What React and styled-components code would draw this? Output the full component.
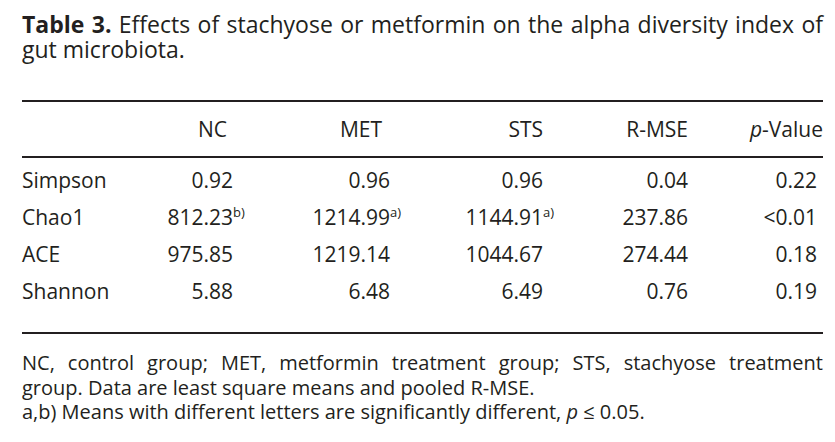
import React from 'react';
import styled, { createGlobalStyle } from 'styled-components';

const GlobalStyle = createGlobalStyle`
  body {
    margin: 0;
    background: #fff;
    color: #231f20;
    font-family: "Open Sans", "DejaVu Sans", sans-serif;
  }
`;

const Page = styled.div`
  width: 835px;
  height: 442px;
  box-sizing: border-box;
  padding: 12px 12px 0 22px;
  overflow: hidden;
`;

const Caption = styled.div`
  font-size: 23px;
  line-height: 25px;
  margin-bottom: 38px;
`;

const Line = styled.div`
  text-align: ${(p) => (p.$justify ? 'justify' : 'left')};
  text-align-last: ${(p) => (p.$justify ? 'justify' : 'left')};
  white-space: nowrap;
`;

const Label = styled.b`
  font-weight: 700;
`;

const Table = styled.div`
  border-top: 2px solid #231f20;
  border-bottom: 2px solid #231f20;
  font-size: 21px;
  line-height: 25px;
`;

const Head = styled.div`
  border-bottom: 2px solid #231f20;
`;

const Body = styled.div`
  padding: 4px 0 22px;
`;

const Row = styled.div`
  display: grid;
  grid-template-columns: 128px 83px 157px 153px 145px 135px;
  align-items: center;
  height: ${(p) => (p.$head ? 54 : 37)}px;
`;

const Cell = styled.div`
  text-align: ${(p) => (p.$left ? 'left' : 'right')};
  padding-right: ${(p) => p.$pad || 0}px;
`;

const Num = styled.span`
  position: relative;
`;

const Sup = styled.sup`
  position: absolute;
  left: 100%;
  top: 3px;
  font-size: 13px;
  line-height: 1;
  vertical-align: baseline;
`;

const Notes = styled.div`
  margin-top: 17px;
  font-size: 20px;
  line-height: 24.5px;
`;

const headers = [
  { text: 'NC', pad: 6 },
  { text: 'MET', pad: 8 },
  { text: 'STS', pad: 0 },
  { text: 'R-MSE', pad: 0 },
  { text: 'p', pad: 0, italic: true },
];

const valuePad = [0, 0, 0, 0, 6];

const rows = [
  { name: 'Simpson', values: [['0.92'], ['0.96'], ['0.96'], ['0.04'], ['0.22']] },
  {
    name: 'Chao1',
    values: [['812.23', 'b)'], ['1214.99', 'a)'], ['1144.91', 'a)'], ['237.86'], ['<0.01']],
  },
  { name: 'ACE', values: [['975.85'], ['1219.14'], ['1044.67'], ['274.44'], ['0.18']] },
  { name: 'Shannon', values: [['5.88'], ['6.48'], ['6.49'], ['0.76'], ['0.19']] },
];

export default function App() {
  return (
    <>
      <GlobalStyle />
      <Page>
        <Caption>
          <Line $justify>
            <Label>Table 3.</Label> Effects of stachyose or metformin on the alpha diversity index of
          </Line>
          <Line>gut microbiota.</Line>
        </Caption>

        <Table>
          <Head>
            <Row $head>
              <Cell $left />
              {headers.map((h) => (
                <Cell key={h.text} $pad={h.pad}>
                  {h.italic ? (
                    <>
                      <i>p</i>-Value
                    </>
                  ) : (
                    h.text
                  )}
                </Cell>
              ))}
            </Row>
          </Head>
          <Body>
            {rows.map((r) => (
              <Row key={r.name}>
                <Cell $left>{r.name}</Cell>
                {r.values.map(([v, sup], i) => (
                  <Cell key={i} $pad={valuePad[i]}>
                    <Num>
                      {v}
                      {sup && <Sup>{sup}</Sup>}
                    </Num>
                  </Cell>
                ))}
              </Row>
            ))}
          </Body>
        </Table>

        <Notes>
          <Line $justify>
            NC, control group; MET, metformin treatment group; STS, stachyose treatment
          </Line>
          <Line>group. Data are least square means and pooled R-MSE.</Line>
          <Line>
            a,b) Means with different letters are significantly different, <i>p</i> ≤ 0.05.
          </Line>
        </Notes>
      </Page>
    </>
  );
}
